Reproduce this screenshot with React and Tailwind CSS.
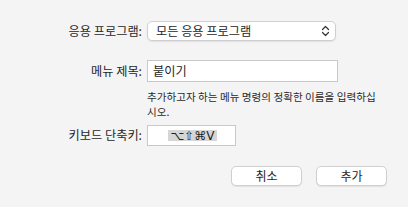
export default function App() {
  return (
    <div
      className="w-[408px] h-[207px] bg-[#f4f4f4] text-[#262626] text-[12.2px] pt-[21px]"
      style={{ fontFamily: '"Noto Sans CJK KR", "Noto Sans", sans-serif' }}
    >
      {/* Application */}
      <div className="flex items-center">
        <div className="w-[142px] text-right leading-none">응용 프로그램:</div>
        <div className="ml-[5px] w-[189px] h-[20px] bg-white border border-[#cfcfcf] rounded-[5px] shadow-[0_1px_1px_rgba(0,0,0,0.08)] flex items-center justify-between pl-[8px] pr-[5px]">
          <span className="leading-none">모든 응용 프로그램</span>
          <svg width="9" height="12" viewBox="0 0 9 12" fill="none" stroke="#333" strokeWidth="1.2" strokeLinecap="round" strokeLinejoin="round">
            <path d="M1.5 4.5 L4.5 1.5 L7.5 4.5" />
            <path d="M1.5 7.5 L4.5 10.5 L7.5 7.5" />
          </svg>
        </div>
      </div>

      {/* Menu title */}
      <div className="flex items-center mt-[19px]">
        <div className="w-[142px] text-right leading-none">메뉴 제목:</div>
        <div className="ml-[5px] w-[191px] h-[22px] bg-white border border-[#c9c9c9] flex items-center pl-[5px]">
          <span className="leading-none">붙이기</span>
        </div>
      </div>
      <div className="ml-[147px] mt-[7px] text-[10.6px] leading-[15px] text-[#2a2a2a]">
        추가하고자 하는 메뉴 명령의 정확한 이름을 입력하십
        <br />
        시오.
      </div>

      {/* Shortcut */}
      <div className="flex items-center mt-[6px]">
        <div className="w-[142px] text-right leading-none">키보드 단축키:</div>
        <div className="ml-[5px] w-[89px] h-[21px] bg-white border border-[#c9c9c9] flex items-center justify-center">
          <span
            className="bg-[#d6d6d6] px-[2px] h-[11px] flex items-center text-[12px] leading-none ml-[2px] text-[#1f1f1f]"
            style={{ fontFamily: '"DejaVu Sans", sans-serif' }}
          >
            ⌥⇧⌘V
          </span>
        </div>
      </div>

      {/* Buttons */}
      <div className="flex justify-end gap-[14px] mt-[20px] pr-[21px]">
        <button className="w-[71px] h-[20px] bg-white border border-[#d0d0d0] rounded-[5px] shadow-[0_1px_1px_rgba(0,0,0,0.08)] text-[12px] leading-none">
          취소
        </button>
        <button className="w-[71px] h-[20px] bg-white border border-[#d0d0d0] rounded-[5px] shadow-[0_1px_1px_rgba(0,0,0,0.08)] text-[12px] leading-none">
          추가
        </button>
      </div>
    </div>
  );
}
